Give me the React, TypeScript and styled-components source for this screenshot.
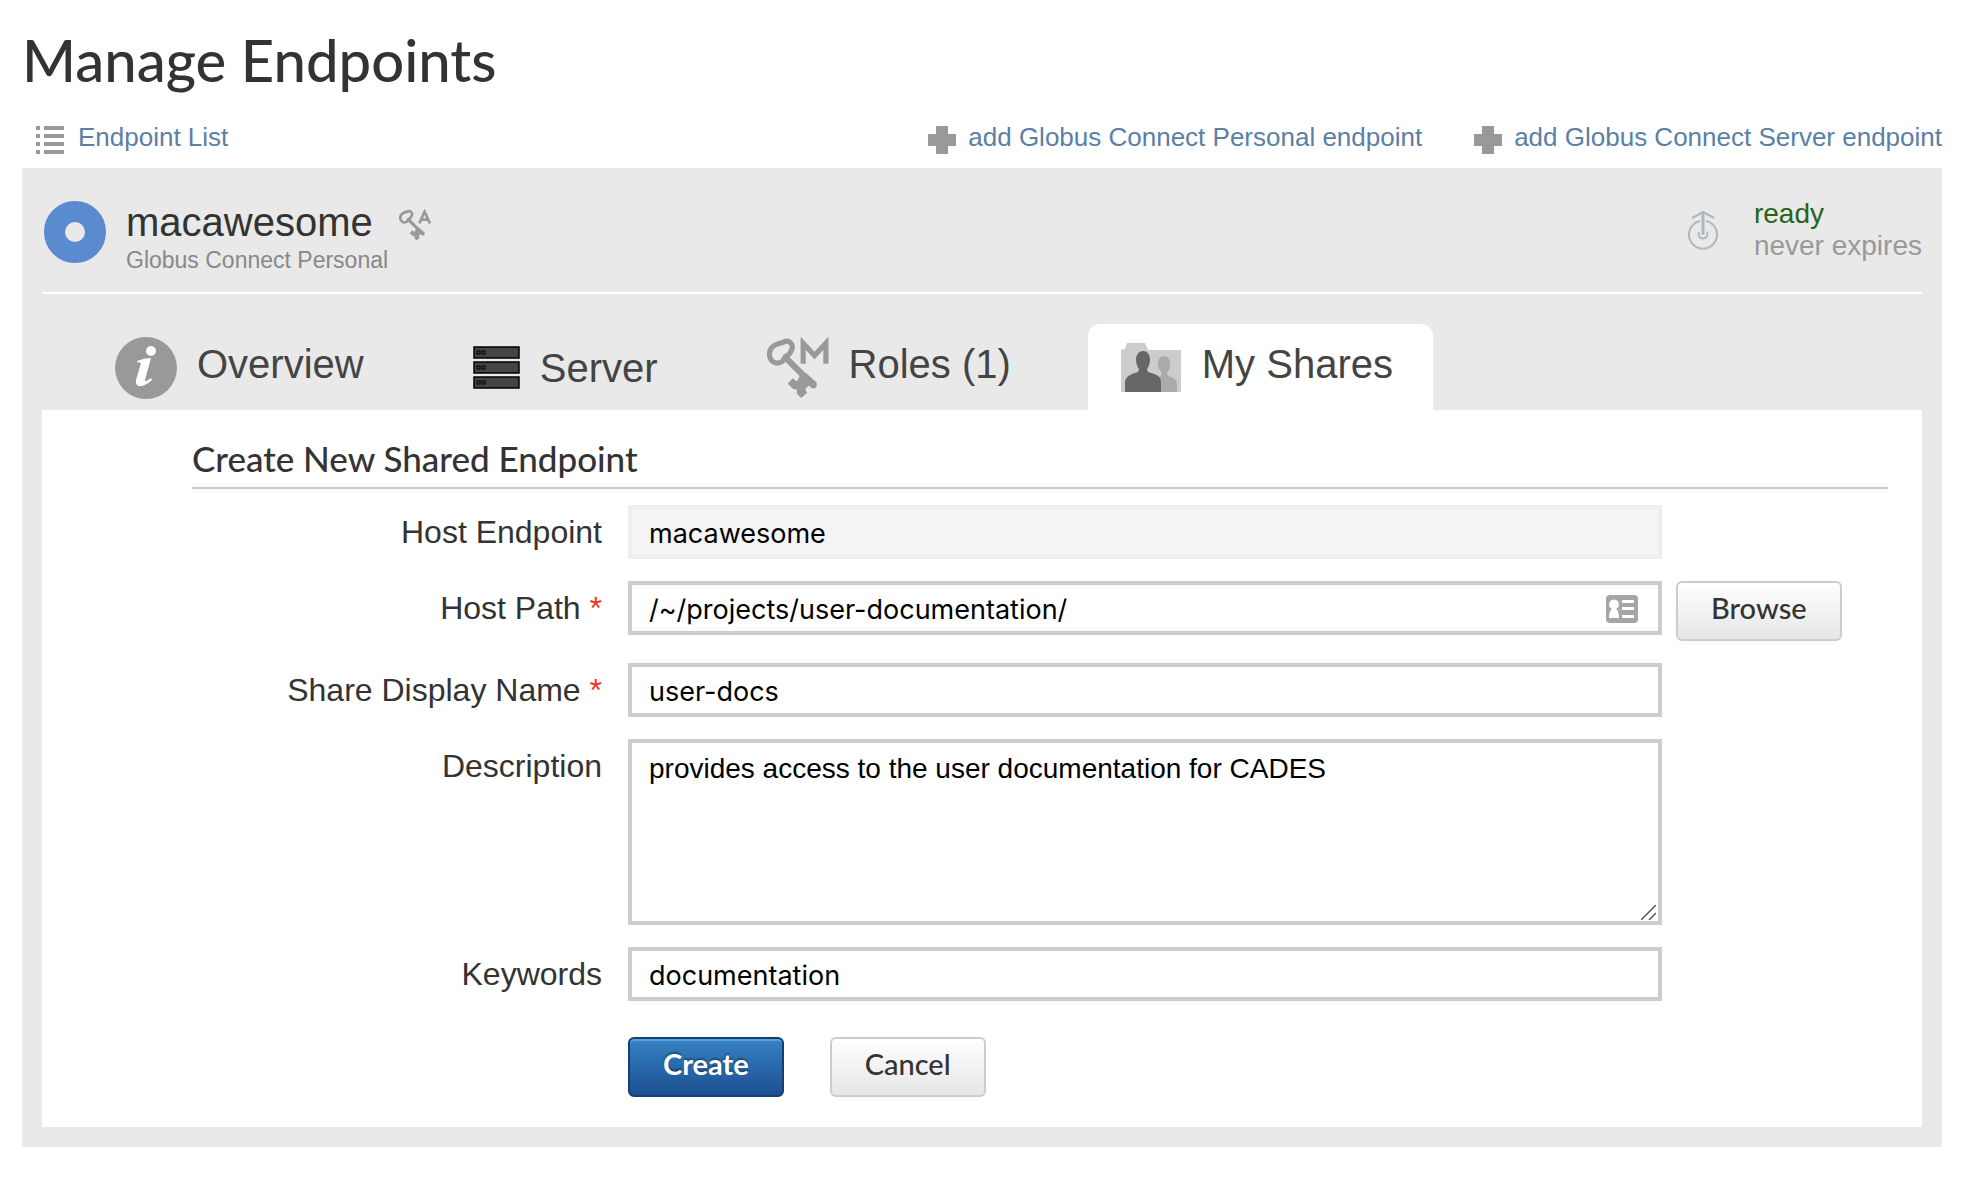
import React from 'react';
import styled, { createGlobalStyle } from 'styled-components';

const sans = '"Liberation Sans", Arial, sans-serif';
const display = 'Lato, "Open Sans", sans-serif';
const entry = 'Inter, "Liberation Sans", sans-serif';

const GlobalStyle = createGlobalStyle`
  *, *::before, *::after { box-sizing: border-box; }
  body { margin: 0; background: #fff; color: #333; font-family: ${sans}; }
  svg { display: block; flex: none; }
`;

const Page = styled.div`
  padding: 20px 30px 36px 22px;
`;

const PageTitle = styled.h1`
  margin: 0;
  font: 500 58px/80px ${display};
`;

const Toolbar = styled.nav`
  display: flex;
  align-items: center;
  gap: 52px;
  height: 68px;
  padding: 6px 0 0 14px;
`;

const ToolLink = styled.a<{ $push?: boolean }>`
  display: flex;
  align-items: center;
  gap: ${(p) => (p.$push ? 14 : 12)}px;
  margin-right: ${(p) => (p.$push ? 'auto' : '0')};
  color: #5b80a5;
  font-size: 26px;
  line-height: 32px;
  text-decoration: none;
  svg { margin-top: 5px; }
`;

const Panel = styled.main`
  padding: 0 20px 20px;
  background: #e9e9e9;
`;

const EndpointHeader = styled.header`
  display: flex;
  align-items: center;
  height: 126px;
  border-bottom: 2px solid #fff;
`;

const EndpointText = styled.div`
  padding: 16px 0 0 18px;
`;

const EndpointName = styled.h2`
  display: flex;
  align-items: center;
  gap: 26px;
  margin: 0;
  font-size: 40px;
  line-height: 44px;
  font-weight: 400;
  svg { margin-top: 6px; }
`;

const EndpointKind = styled.p`
  margin: 0;
  color: #888;
  font-size: 23px;
  line-height: 32px;
`;

const Status = styled.div`
  display: flex;
  align-items: center;
  gap: 36px;
  margin-left: auto;
  color: #999;
  font-size: 28px;
  line-height: 32px;
`;

const Ready = styled.div`
  color: #2b621a;
`;

const Tabs = styled.div`
  display: flex;
  height: 116px;
  padding: 30px 0 0 41px;
`;

const Tab = styled.button<{ $active?: boolean }>`
  display: flex;
  align-items: center;
  gap: 20px;
  margin-right: 37px;
  padding: 2px 40px 0 32px;
  border: 0;
  border-radius: 12px 12px 0 0;
  background: ${(p) => (p.$active ? '#fff' : 'transparent')};
  color: #444;
  font: 400 40px/48px ${sans};
`;

const TabText = styled.span<{ $low?: boolean }>`
  padding-bottom: ${(p) => (p.$low ? 0 : 8)}px;
`;

const Content = styled.section`
  padding: 26px 34px 30px 150px;
  background: #fff;
`;

const SectionTitle = styled.h3`
  margin: 0 0 16px;
  padding-bottom: 7px;
  border-bottom: 2px solid #ccc;
  font: 500 35px/44px ${display};
`;

const Form = styled.form`
  display: grid;
  grid-template-columns: 436px minmax(0, 1034px) 1fr;
  row-gap: 22px;
`;

const Label = styled.label`
  padding: 6px 26px 0 0;
  font-size: 32px;
  line-height: 42px;
  text-align: right;
`;

const Required = styled.span`
  color: #ee3322;
`;

const Field = styled.div`
  position: relative;
  grid-column: 2;
`;

const Side = styled.div`
  padding-left: 14px;
`;

const TextInput = styled.input`
  display: block;
  width: 100%;
  height: 54px;
  padding: 2px 17px 0;
  border: 4px solid #ccc;
  border-radius: 0;
  background: #fff;
  color: #000;
  font: 400 27px/36px ${entry};
  &:disabled { background: #f4f4f4; border-color: #eee; opacity: 1; }
`;

const TextBox = styled.textarea`
  display: block;
  width: 100%;
  height: 186px;
  padding: 8px 17px;
  border: 4px solid #ccc;
  color: #000;
  font: 400 28px/36px ${sans};
  resize: both;
  &::-webkit-resizer { background: transparent; }
`;

const FieldIcon = styled.span`
  position: absolute;
  top: 14px;
  right: 24px;
`;

const Grip = styled.span`
  position: absolute;
  right: 6px;
  bottom: 5px;
  pointer-events: none;
`;

const Button = styled.button<{ $primary?: boolean }>`
  height: 60px;
  padding: 0 33px 6px;
  border: 2px solid ${(p) => (p.$primary ? '#153f73' : '#ccc')};
  border-radius: 6px;
  background: ${(p) => (p.$primary ? 'linear-gradient(#3582c4, #1d4f91)' : 'linear-gradient(#fff, #e6e6e6)')};
  box-shadow: ${(p) => (p.$primary ? 'inset 0 2px 0 #5a9fd6' : 'none')};
  color: ${(p) => (p.$primary ? '#fff' : '#333')};
  font: ${(p) => (p.$primary ? 700 : 500)} 29px/36px ${display};
  text-shadow: ${(p) => (p.$primary ? '0 -2px 2px rgba(0,0,0,.35)' : 'none')};
`;

const Actions = styled.div`
  display: flex;
  grid-column: 2;
  gap: 46px;
  padding-top: 14px;
`;

const ListIcon = () => (
  <svg width="28" height="30" viewBox="0 0 28 30" fill="#999">
    {[1, 9, 17, 25].map((y) => (
      <g key={y}><rect x="0" y={y} width="4" height="4" /><rect x="8" y={y} width="20" height="4" /></g>
    ))}
  </svg>
);

const PlusIcon = () => (
  <svg width="28" height="28" viewBox="0 0 28 28" fill="#999"><path d="M8 0h12v8h8v12h-8v8H8v-8H0V8h8z" /></svg>
);

const RingIcon = () => (
  <svg width="66" height="66" viewBox="0 0 66 66"><circle cx="33" cy="35" r="20.5" fill="none" stroke="#5a8bce" strokeWidth="21" /></svg>
);

const KeyIcon = ({ size, letter }: { size: number; letter: 'A' | 'M' }) => (
  <svg width={size} height={size} viewBox="0 0 60 60" fill="none" stroke="#999" strokeWidth="5">
    <path d="M16 5C22 2 27 8 23 14C22 17 20 18 18 19C17 23 13 26 8 25C2 23 1 16 4 11C7 7 11 6 16 5Z" />
    <path d="M16 18L45 47" strokeWidth="6" />
    <path d="M32 37L38 35L48 44Q49 49 45 50L40 47L37 51L39 54L33 59L29 55V51L25 50L20 45L25 40L29 43Z" fill="#999" stroke="none" />
    {letter === 'M'
      ? <path d="M35 26V6L46 18L57 6V26" />
      : <path d="M38 27L48 5L58 27M42 20H54" />}
  </svg>
);

const ActivationIcon = () => (
  <svg width="30" height="40" viewBox="0 0 30 40" fill="none" stroke="#b0b7bd" strokeWidth="2">
    <path d="M12 11A14 14 0 1 0 18 11M4 8L15 2L26 8" />
    <path d="M15 25V2" strokeWidth="3" />
    <path d="M11 22A4.500 4.500 0 1 0 19 22" />
  </svg>
);

const InfoIcon = () => (
  <svg width="62" height="62" viewBox="0 0 62 62">
    <circle cx="31" cy="31" r="31" fill="#999" />
    <circle cx="36" cy="14" r="5" fill="#fff" />
    <path d="M22 24q7-3 14-3l-6 22q0 3 6-2l1 2q-8 7-13 6-4-1-3-6l5-17-4-1z" fill="#fff" />
  </svg>
);

const ServerIcon = () => (
  <svg width="47" height="44" viewBox="0 0 47 44">
    {[1, 16, 31].map((y) => (
      <g key={y} fill="#444" stroke="#000">
        <rect x="1" y={y} width="45" height="11" strokeWidth="1.5" />
        <rect x="4" y={y + 4} width="3" height="3" /><rect x="9" y={y + 4} width="3" height="3" />
      </g>
    ))}
  </svg>
);

const SharesIcon = () => (
  <svg width="62" height="50" viewBox="0 0 62 50">
    <path d="M1 7l4-1 2-6h18l3 7h33v42H1z" fill="#ccc" />
    <path d="M39 49V36l3-6q-5-5-4-11 1-6 6-6t6 6q1 6-3 11l1 3q9 2 9 8v8z" fill="#aaa" />
    <path d="M5 49V38q1-6 13-9l1-3q-3-4-3-10 1-8 7-8t7 8q0 6-3 10l1 3q13 3 13 9v11z" fill="#666" />
  </svg>
);

const CardIcon = () => (
  <svg width="32" height="28" viewBox="0 0 32 28">
    <rect width="32" height="28" rx="4" fill="#a6a6a6" />
    <path d="M3 23q0-7 3-9a5 5 0 1 1 4 0q3 2 3 9zM16 5h12v3H16zM16 12h12v3H16zM16 20h12v3H16z" fill="#fff" />
  </svg>
);

const GripIcon = () => (
  <svg width="15" height="15" viewBox="0 0 15 15" stroke="#555" strokeWidth="1.5"><path d="M0 15L15 0M8 15L15 8" /></svg>
);

export default function App() {
  return (
    <Page>
      <GlobalStyle />
      <PageTitle>Manage Endpoints</PageTitle>
      <Toolbar>
        <ToolLink href="#list" $push><ListIcon />Endpoint List</ToolLink>
        <ToolLink href="#personal"><PlusIcon />add Globus Connect Personal endpoint</ToolLink>
        <ToolLink href="#server"><PlusIcon />add Globus Connect Server endpoint</ToolLink>
      </Toolbar>
      <Panel>
        <EndpointHeader>
          <RingIcon />
          <EndpointText>
            <EndpointName>macawesome <KeyIcon size={32} letter="A" /></EndpointName>
            <EndpointKind>Globus Connect Personal</EndpointKind>
          </EndpointText>
          <Status>
            <ActivationIcon />
            <div><Ready>ready</Ready>never expires</div>
          </Status>
        </EndpointHeader>
        <Tabs role="tablist">
          <Tab role="tab"><InfoIcon /><TabText>Overview</TabText></Tab>
          <Tab role="tab"><ServerIcon /><TabText $low>Server</TabText></Tab>
          <Tab role="tab"><KeyIcon size={62} letter="M" /><TabText>Roles (1)</TabText></Tab>
          <Tab role="tab" aria-selected="true" $active><SharesIcon /><TabText>My Shares</TabText></Tab>
        </Tabs>
        <Content>
          <SectionTitle>Create New Shared Endpoint</SectionTitle>
          <Form>
            <Label htmlFor="host">Host Endpoint</Label>
            <Field><TextInput id="host" defaultValue="macawesome" disabled /></Field>
            <Side />
            <Label htmlFor="path">Host Path <Required>*</Required></Label>
            <Field>
              <TextInput id="path" defaultValue="/~/projects/user-documentation/" />
              <FieldIcon><CardIcon /></FieldIcon>
            </Field>
            <Side><Button type="button">Browse</Button></Side>
            <Label htmlFor="name">Share Display Name <Required>*</Required></Label>
            <Field><TextInput id="name" defaultValue="user-docs" /></Field>
            <Side />
            <Label htmlFor="description">Description</Label>
            <Field>
              <TextBox id="description" defaultValue="provides access to the user documentation for CADES" />
              <Grip><GripIcon /></Grip>
            </Field>
            <Side />
            <Label htmlFor="keywords">Keywords</Label>
            <Field><TextInput id="keywords" defaultValue="documentation" /></Field>
            <Side />
            <Actions>
              <Button type="button" $primary>Create</Button>
              <Button type="button">Cancel</Button>
            </Actions>
          </Form>
        </Content>
      </Panel>
    </Page>
  );
}
